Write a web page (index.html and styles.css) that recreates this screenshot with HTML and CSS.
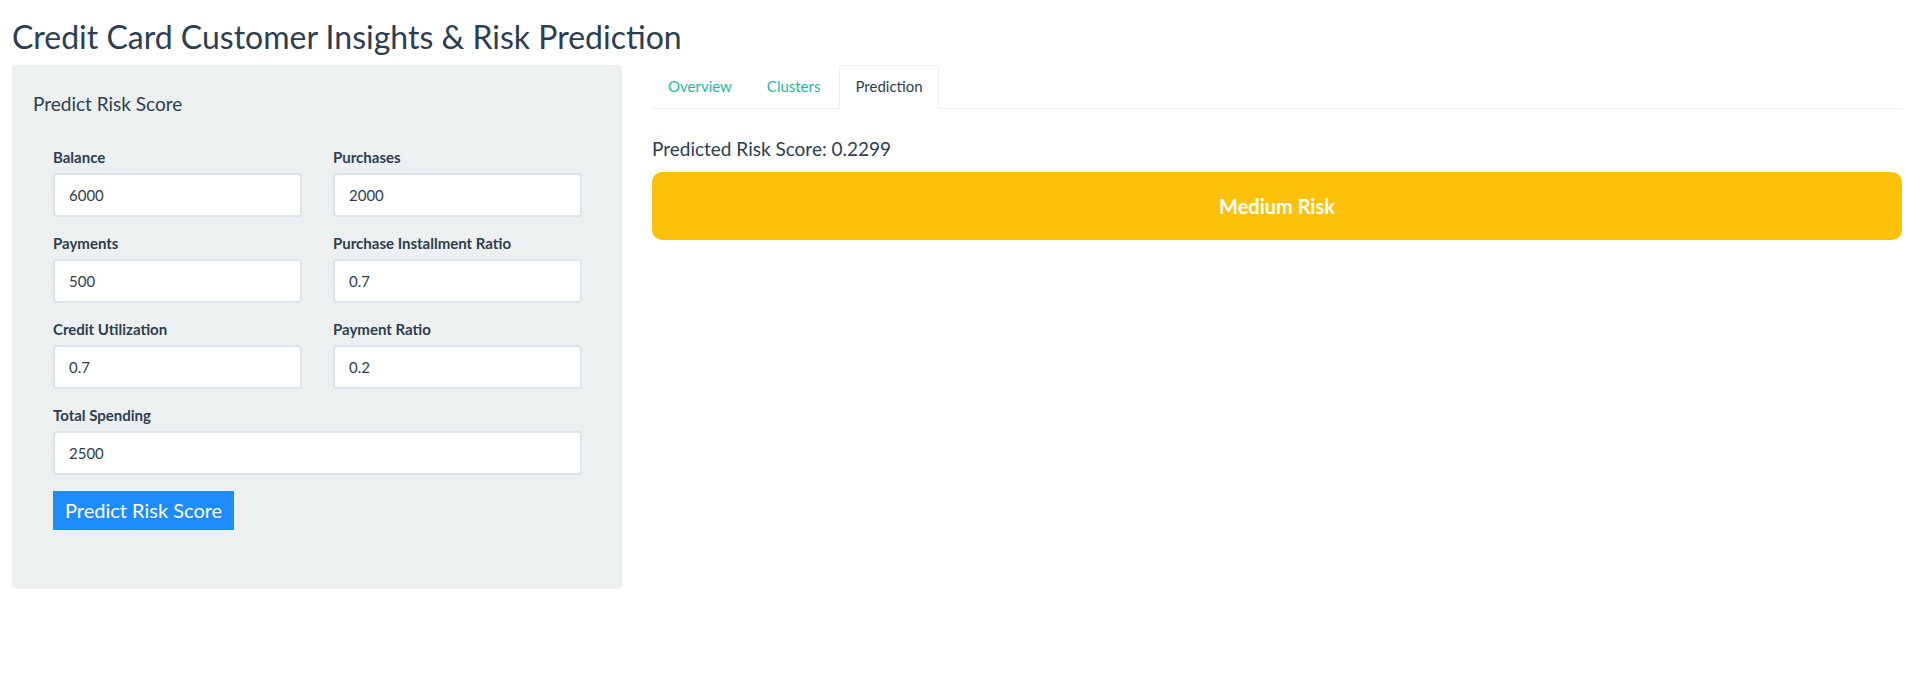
FILE: index.html
```html
<!DOCTYPE html>
<html lang="en">
<head>
<meta charset="utf-8">
<title>Credit Card Customer Insights &amp; Risk Prediction</title>
<link rel="stylesheet" href="styles.css">
</head>
<body>
<div class="page">
  <h2 class="title">Credit Card Customer Insights &amp; Risk Prediction</h2>
  <div class="layout">
    <aside class="well">
      <h4 class="well-heading">Predict Risk Score</h4>
      <div class="form-grid">
        <div class="form-group">
          <label class="label">Balance</label>
          <input class="input" type="text" value="6000">
        </div>
        <div class="form-group">
          <label class="label">Purchases</label>
          <input class="input" type="text" value="2000">
        </div>
        <div class="form-group">
          <label class="label">Payments</label>
          <input class="input" type="text" value="500">
        </div>
        <div class="form-group">
          <label class="label">Purchase Installment Ratio</label>
          <input class="input" type="text" value="0.7">
        </div>
        <div class="form-group">
          <label class="label">Credit Utilization</label>
          <input class="input" type="text" value="0.7">
        </div>
        <div class="form-group">
          <label class="label">Payment Ratio</label>
          <input class="input" type="text" value="0.2">
        </div>
        <div class="form-group wide">
          <label class="label">Total Spending</label>
          <input class="input" type="text" value="2500">
        </div>
        <div class="actions">
          <button class="btn" type="button">Predict Risk Score</button>
        </div>
      </div>
    </aside>
    <main class="main">
      <ul class="tabs">
        <li class="tab"><a class="tab-link">Overview</a></li>
        <li class="tab"><a class="tab-link">Clusters</a></li>
        <li class="tab active"><a class="tab-link">Prediction</a></li>
      </ul>
      <div class="tab-content">
        <h4 class="score">Predicted Risk Score: 0.2299</h4>
        <div class="risk-box">Medium Risk</div>
      </div>
    </main>
  </div>
</div>
</body>
</html>
```

FILE: styles.css
```css
* { box-sizing: border-box; }

body {
  margin: 0;
  font-family: Lato, "Open Sans", "Liberation Sans", sans-serif;
  font-size: 15px;
  color: #2c3e50;
  background: #ffffff;
}

.page {
  padding: 0 14px 0 12px;
}

.title {
  margin: 19px 0 11px;
  font-size: 32px;
  font-weight: 400;
  line-height: 1.1;
  color: #2c3e50;
}

.layout {
  display: flex;
  gap: 30px;
  align-items: flex-start;
}

.well {
  width: 610px;
  flex: none;
  background: #ecf0f1;
  border-radius: 4px;
  padding: 19px 19px 59px;
}

.well-heading {
  margin: 10px 0 0 2px;
  font-size: 19px;
  font-weight: 400;
  line-height: 1.1;
}

.form-grid {
  display: grid;
  grid-template-columns: 1fr 1fr;
  column-gap: 31px;
  row-gap: 16px;
  padding: 0 21px 0 22px;
  margin-top: 32px;
}

.form-group {
  display: flex;
  flex-direction: column;
}

.form-group.wide,
.actions {
  grid-column: 1 / -1;
}

.label {
  font-size: 15px;
  font-weight: 700;
  line-height: 20px;
  margin-bottom: 6px;
}

.input {
  height: 44px;
  width: 100%;
  border: 2px solid #dce4ec;
  border-radius: 4px;
  background: #ffffff;
  padding: 0 14px;
  font-family: inherit;
  font-size: 15px;
  color: #2c3e50;
  outline: none;
}

.btn {
  height: 39px;
  padding: 0 12px;
  border: none;
  border-radius: 0;
  background: #1e8cff;
  color: #ffffff;
  font-family: inherit;
  font-size: 20px;
  line-height: 39px;
  cursor: pointer;
}

.main {
  flex: 1;
  min-width: 0;
}

.tabs {
  list-style: none;
  margin: 0;
  padding: 0;
  display: flex;
  border-bottom: 1px solid #ecf0f1;
}

.tab {
  margin-right: 3px;
  margin-bottom: -1px;
}

.tab-link {
  display: block;
  padding: 10px 15px;
  line-height: 21.43px;
  font-size: 15px;
  color: #18bc9c;
  border: 1px solid transparent;
  border-radius: 4px 4px 0 0;
}

.tab.active .tab-link {
  color: #2c3e50;
  background: #ffffff;
  border-color: #ecf0f1;
  border-bottom-color: transparent;
}

.score {
  margin: 30px 0 12px;
  font-size: 19px;
  font-weight: 400;
  line-height: 1.1;
}

.risk-box {
  background: #fdc10a;
  color: #ffffff;
  border-radius: 10px;
  padding: 20px;
  text-align: center;
  font-size: 20px;
  font-weight: 700;
  line-height: 28px;
}
```
